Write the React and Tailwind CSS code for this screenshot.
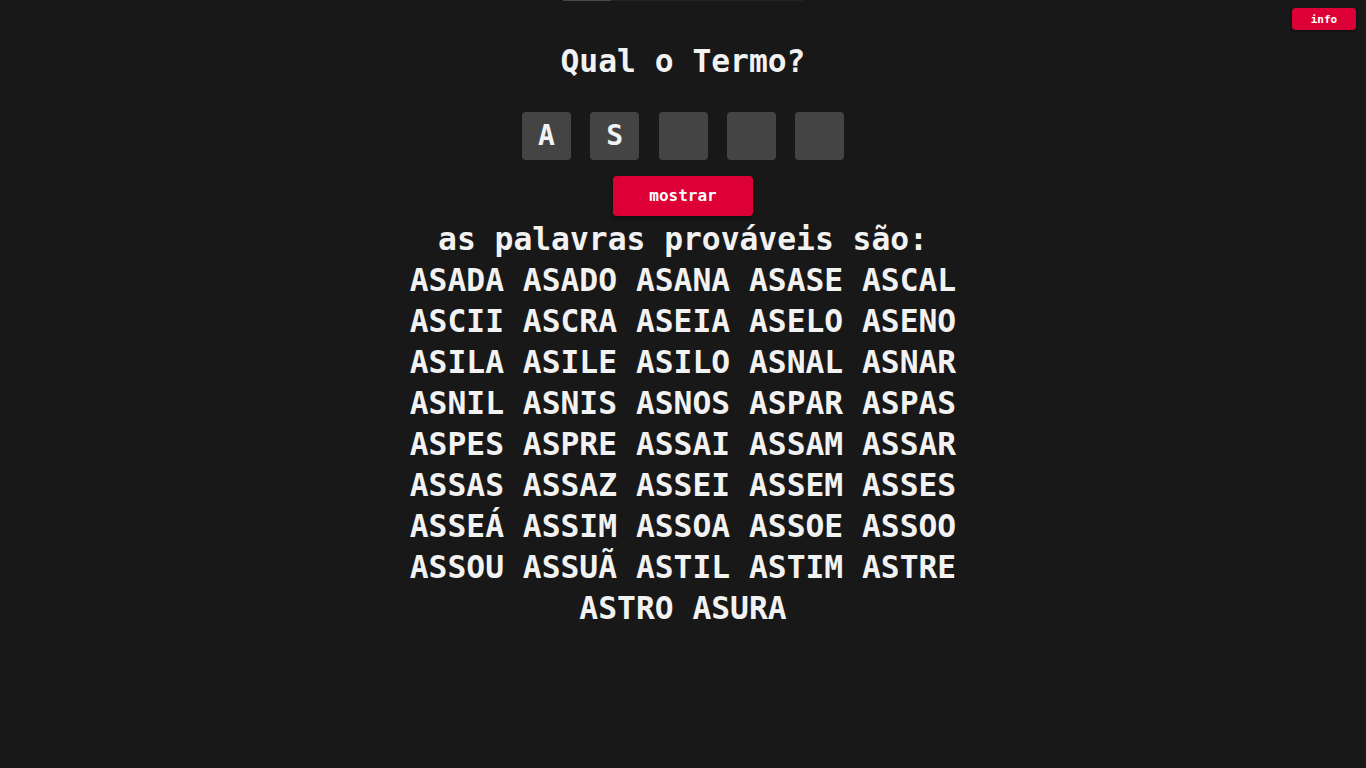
import React from "react";

const words = [
  "ASADA","ASADO","ASANA","ASASE","ASCAL",
  "ASCII","ASCRA","ASEIA","ASELO","ASENO",
  "ASILA","ASILE","ASILO","ASNAL","ASNAR",
  "ASNIL","ASNIS","ASNOS","ASPAR","ASPAS",
  "ASPES","ASPRE","ASSAI","ASSAM","ASSAR",
  "ASSAS","ASSAZ","ASSEI","ASSEM","ASSES",
  "ASSEÁ","ASSIM","ASSOA","ASSOE","ASSOO",
  "ASSOU","ASSUÃ","ASTIL","ASTIM","ASTRE",
  "ASTRO","ASURA",
];

const tiles = ["A", "S", "", "", ""];

export default function App() {
  return (
    <div
      className="relative min-h-screen w-full bg-[#181818] text-[#f2f2f2] flex flex-col items-center"
      style={{ fontFamily: '"DejaVu Sans Mono", "Liberation Mono", monospace' }}
    >
      <div className="w-[240px] h-px bg-[#242424] flex">
        <div className="w-[48px] h-px bg-[#474747]" />
      </div>

      <button className="absolute top-2 right-[10px] w-[64px] h-[22px] rounded-[4px] bg-[#dc0036] text-white text-[11px] font-bold leading-[23px] shadow-[0_1px_3px_rgba(0,0,0,0.4)]">
        info
      </button>

      <h1 className="mt-[40px] text-[31.3px] leading-[41px] font-bold">Qual o Termo?</h1>

      <div className="mt-[30px] flex gap-[19.25px]">
        {tiles.map((t, i) => (
          <div
            key={i}
            className="w-[49px] h-[48px] rounded-[4px] bg-[#444444] flex items-center justify-center text-[28px] font-bold"
          >
            {t}
          </div>
        ))}
      </div>

      <button className="mt-[16px] w-[140px] h-[40px] rounded-[4px] bg-[#dc0036] text-white text-[16px] font-bold shadow-[0_2px_4px_rgba(0,0,0,0.4)]">
        mostrar
      </button>

      <p className="mt-[3px] text-[31.3px] leading-[41px] font-bold">as palavras prováveis são:</p>

      <p className="w-[600px] text-center text-[31.3px] leading-[41px] font-bold">
        {words.join(" ")}
      </p>
    </div>
  );
}
